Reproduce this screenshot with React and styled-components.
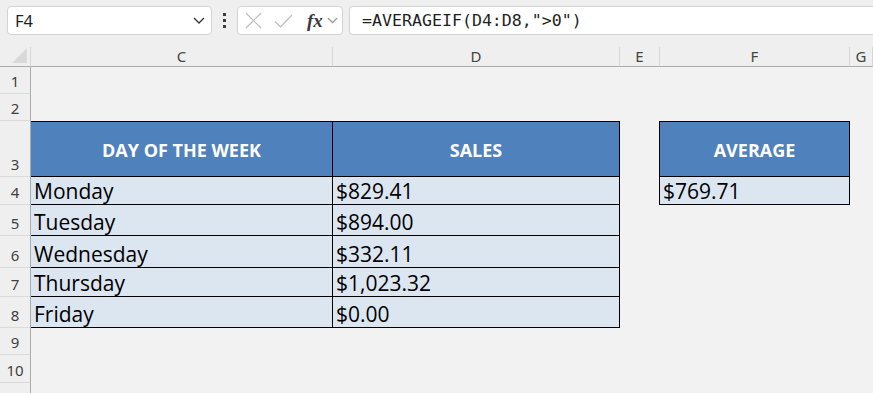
import React from "react";
import styled, { createGlobalStyle } from "styled-components";

const Global = createGlobalStyle`
  html, body {
    margin: 0;
    padding: 0;
    background: #f2f2f2;
    overflow: hidden;
  }
  * {
    box-sizing: border-box;
  }
`;

const Page = styled.div`
  width: 873px;
  height: 393px;
  overflow: hidden;
  font-family: "Noto Sans", "Open Sans", sans-serif;
`;

const Toolbar = styled.div`
  display: flex;
  align-items: center;
  height: 44px;
  padding: 6px 0 9px 7px;
  background: #efefef;
`;

const NameBox = styled.div`
  display: flex;
  align-items: center;
  justify-content: space-between;
  width: 205px;
  height: 29px;
  padding: 0 6px 0 7px;
  background: #fff;
  border: 1px solid #d3d3d3;
  border-radius: 4px;
  font-size: 16.5px;
  color: #1f1f1f;
`;

const Grip = styled.div`
  display: flex;
  flex-direction: column;
  gap: 3px;
  margin: 0 11px 0 11px;

  span {
    width: 3px;
    height: 3px;
    background: #3c3c3c;
  }
`;

const FxBox = styled.div`
  display: flex;
  align-items: center;
  width: 106px;
  height: 29px;
  padding: 0 3px 0 7px;
  gap: 12px;
  background: #fff;
  border: 1px solid #d3d3d3;
  border-radius: 4px;
`;

const Fx = styled.span`
  font-family: "Liberation Serif", serif;
  font-style: italic;
  font-weight: bold;
  font-size: 19px;
  color: #3a3a3a;
  margin-left: 2px;
  margin-right: -8px;
`;

const FormulaInput = styled.div`
  flex: 1;
  display: flex;
  align-items: center;
  height: 29px;
  margin-left: 6px;
  padding-left: 12px;
  background: #fff;
  border: 1px solid #d3d3d3;
  border-right: none;
  border-radius: 4px 0 0 4px;
  font-family: "DejaVu Sans Mono", "Liberation Mono", monospace;
  font-size: 16.6px;
  color: #1f1f1f;
`;

const Sheet = styled.div`
  display: grid;
  grid-template-columns: 31px 302px 287px 40px 190px 1fr;
  grid-template-rows: 23px 27px 27px 56px 28px 31px 32px 29px 31px 27px 28px 28px;
`;

const Corner = styled.div`
  display: flex;
  align-items: flex-end;
  justify-content: flex-end;
  padding: 0 3px 3px 0;
  margin-top: 3px;
  border-right: 1px solid #d6d6d6;
  border-bottom: 1px solid #ababab;
  background: #efefef;

  &::before {
    content: "";
    width: 15px;
    height: 15px;
    background: #d9d9d9;
    clip-path: polygon(100% 0, 100% 100%, 0 100%);
  }
`;

const ColHead = styled.div`
  display: flex;
  align-items: center;
  justify-content: center;
  margin-top: 3px;
  padding-bottom: 1px;
  border-right: 1px solid #d6d6d6;
  border-bottom: 1px solid #ababab;
  background: #efefef;
  font-size: 15px;
  color: #444;
`;

const HeadFill = styled.div`
  grid-column: 1 / -1;
  grid-row: 1;
  background: #efefef;
`;

const RowHead = styled.div`
  display: flex;
  align-items: flex-end;
  justify-content: center;
  padding-bottom: 3px;
  background: #efefef;
  border-right: 1px solid #ababab;
  border-bottom: 1px solid #dadada;
  font-size: 15px;
  line-height: 18px;
  color: #3f3f3f;
`;

const Cell = styled.div`
  display: flex;
  align-items: ${(p) => (p.$kind === "head" ? "center" : "flex-end")};
  justify-content: ${(p) => (p.$kind === "head" ? "center" : "flex-start")};
  min-width: 0;
  overflow: hidden;
  white-space: nowrap;
  font-family: "Open Sans", "Noto Sans", sans-serif;
  ${(p) =>
    p.$kind === "head" &&
    `
    background: #4f81bd;
    color: #fff;
    font-weight: 700;
    font-size: 18px;
    border-top: 1px solid #000;
    padding-top: 1px;
  `}
  ${(p) =>
    p.$kind === "data" &&
    `
    background: #dce6f1;
    color: #000;
    font-size: 21px;
    line-height: 26px;
    padding: 0 4px 0 3px;
  `}
  ${(p) =>
    p.$kind &&
    `
    border-right: 1px solid #000;
    border-bottom: 1px solid #000;
  `}
  ${(p) =>
    p.$edge &&
    `
    margin-left: -1px;
    border-left: 1px solid #000;
  `}
`;

const XIcon = () => (
  <svg width="17" height="17" viewBox="0 0 17 17">
    <path d="M1 1 L16 16 M16 1 L1 16" stroke="#bdbdbd" strokeWidth="1.2" fill="none" />
  </svg>
);

const CheckIcon = () => (
  <svg width="19" height="14" viewBox="0 0 19 14">
    <path d="M1 7.5 L6.5 13 L18 1" stroke="#bdbdbd" strokeWidth="1.2" fill="none" />
  </svg>
);

const Chevron = ({ size = 12, color = "#333" }) => (
  <svg width={size} height={size / 2 + 1} viewBox="0 0 12 7">
    <path d="M1 1 L6 6 L11 1" stroke={color} strokeWidth="1.3" fill="none" />
  </svg>
);

const cols = ["C", "D", "E", "F", "G"];

const rows = [
  { n: 1 },
  { n: 2 },
  { n: 3, c: ["head", "DAY OF THE WEEK"], d: ["head", "SALES"], f: ["head", "AVERAGE"] },
  { n: 4, c: ["data", "Monday"], d: ["data", "$829.41"], f: ["data", "$769.71"] },
  { n: 5, c: ["data", "Tuesday"], d: ["data", "$894.00"] },
  { n: 6, c: ["data", "Wednesday"], d: ["data", "$332.11"] },
  { n: 7, c: ["data", "Thursday"], d: ["data", "$1,023.32"] },
  { n: 8, c: ["data", "Friday"], d: ["data", "$0.00"] },
  { n: 9 },
  { n: 10 },
  { n: 11, hidden: true },
];

const Data = ({ v, edge }) =>
  v ? (
    <Cell $kind={v[0]} $edge={edge}>
      {v[1]}
    </Cell>
  ) : (
    <Cell />
  );

export default function App() {
  return (
    <Page>
      <Global />
      <Toolbar>
        <NameBox>
          F4
          <Chevron />
        </NameBox>
        <Grip>
          <span />
          <span />
          <span />
        </Grip>
        <FxBox>
          <XIcon />
          <CheckIcon />
          <Fx>fx</Fx>
          <Chevron size={11} color="#9a9a9a" />
        </FxBox>
        <FormulaInput>=AVERAGEIF(D4:D8,"&gt;0")</FormulaInput>
      </Toolbar>
      <Sheet>
        <HeadFill />
        <Corner style={{ gridRow: 1, gridColumn: 1 }} />
        {cols.map((c, i) => (
          <ColHead key={c} style={{ gridRow: 1, gridColumn: i + 2 }}>
            {c}
          </ColHead>
        ))}
        {rows.map((r) => (
          <React.Fragment key={r.n}>
            <RowHead>{r.hidden ? "" : r.n}</RowHead>
            <Data v={r.c} />
            <Data v={r.d} />
            <Cell />
            <Data v={r.f} edge />
            <Cell />
          </React.Fragment>
        ))}
      </Sheet>
    </Page>
  );
}
